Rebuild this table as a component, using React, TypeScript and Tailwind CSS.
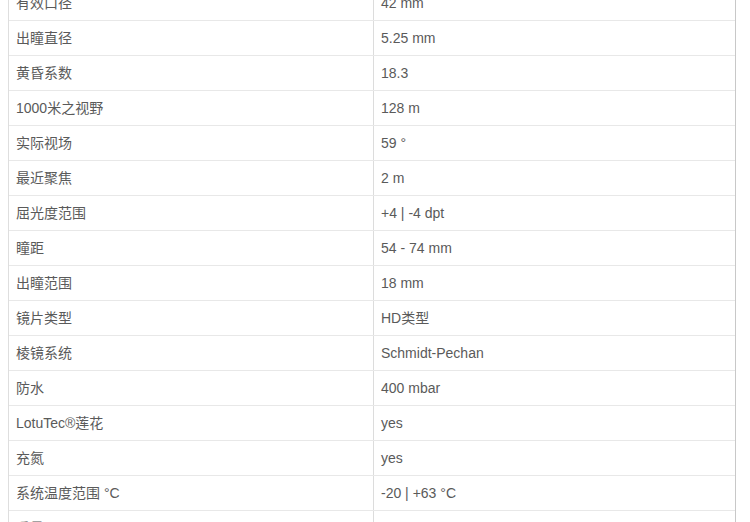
const specs: [string, string][] = [
  ["有效口径", "42 mm"],
  ["出瞳直径", "5.25 mm"],
  ["黄昏系数", "18.3"],
  ["1000米之视野", "128 m"],
  ["实际视场", "59 °"],
  ["最近聚焦", "2 m"],
  ["屈光度范围", "+4 | -4 dpt"],
  ["瞳距", "54 - 74 mm"],
  ["出瞳范围", "18 mm"],
  ["镜片类型", "HD类型"],
  ["棱镜系统", "Schmidt-Pechan"],
  ["防水", "400 mbar"],
  ["LotuTec®莲花", "yes"],
  ["充氮", "yes"],
  ["系统温度范围 °C", "-20 | +63 °C"],
  ["重量", "830 g"],
];

export default function App() {
  return (
    <div className="h-[522px] w-[750px] overflow-hidden bg-white">
      <div
        className="ml-2 mt-[-14px] w-[728px] border-l border-r border-l-[#dedede] border-r-[#c8c8c8] text-[14px] text-[#5a5a5a]"
        style={{ fontFamily: '"Liberation Sans", "Noto Sans CJK SC", sans-serif' }}
      >
        {specs.map(([label, value]) => (
          <div key={label} className="grid h-[35px] grid-cols-[364px_1fr] border-b border-[#e8e8e8]">
            <div className="flex items-center pl-[7px]">{label}</div>
            <div className="flex items-center border-l border-[#dcdcdc] pl-[7px]">{value}</div>
          </div>
        ))}
      </div>
    </div>
  );
}
